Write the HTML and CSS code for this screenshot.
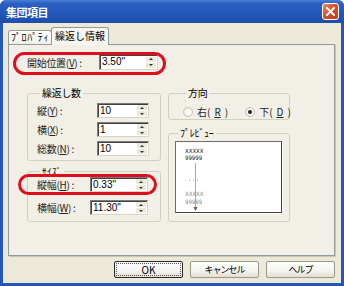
FILE: index.html
```html
<!DOCTYPE html>
<html lang="ja">
<head>
    <meta charset="UTF-8">
    <title>集団項目</title>
    <link rel="stylesheet" href="styles.css">
</head>
<body>
    <div class="window">
        <div class="titlebar">
            <span class="title">集団項目</span>
            <span class="close">
                <svg width="9" height="9" viewBox="0 0 9 9"><path d="M1 1 L8 8 M8 1 L1 8" stroke="#fff" stroke-width="2" stroke-linecap="square"/></svg>
            </span>
        </div>
        <div class="client">
            <div class="tabs">
                <div class="tab">ﾌﾟﾛﾊﾟﾃｨ</div>
                <div class="tab active">繰返し情報</div>
            </div>
            <div class="panel">
                <div class="field start marked">
                    <label>開始位置(<u>V</u>) :</label>
                    <div class="spin"><span class="val">3.50"</span><span class="arrows"><i class="up"></i><i class="down"></i></span></div>
                </div>
                <div class="columns">
                    <div class="col left">
                        <fieldset class="group repeat">
                            <legend>繰返し数</legend>
                            <div class="field">
                                <label>縦(<u>Y</u>) :</label>
                                <div class="spin"><span class="val">10</span><span class="arrows"><i class="up"></i><i class="down"></i></span></div>
                            </div>
                            <div class="field">
                                <label>横(<u>X</u>) :</label>
                                <div class="spin"><span class="val">1</span><span class="arrows"><i class="up"></i><i class="down"></i></span></div>
                            </div>
                            <div class="field">
                                <label>総数(<u>N</u>) :</label>
                                <div class="spin"><span class="val">10</span><span class="arrows"><i class="up"></i><i class="down"></i></span></div>
                            </div>
                        </fieldset>
                        <fieldset class="group size">
                            <legend>ｻｲｽﾞ</legend>
                            <div class="field marked">
                                <label>縦幅(<u>H</u>) :</label>
                                <div class="spin"><span class="val">0.33"</span><span class="arrows"><i class="up"></i><i class="down"></i></span></div>
                            </div>
                            <div class="field">
                                <label>横幅(<u>W</u>) :</label>
                                <div class="spin"><span class="val">11.30"</span><span class="arrows"><i class="up"></i><i class="down"></i></span></div>
                            </div>
                        </fieldset>
                    </div>
                    <div class="col right">
                        <fieldset class="group dir">
                            <legend>方向</legend>
                            <div class="radios">
                                <span class="radio"><i class="dot"></i>右(<u>R</u>)</span>
                                <span class="radio checked"><i class="dot"></i>下(<u>D</u>)</span>
                            </div>
                        </fieldset>
                        <fieldset class="group preview">
                            <legend>ﾌﾟﾚﾋﾞｭｰ</legend>
                            <div class="preview-box">
                                <svg width="105" height="70" viewBox="0 0 105 70">
                                    <line x1="19.5" y1="21" x2="19.5" y2="66" stroke="#a8a8a8" stroke-width="1"/>
                                    <line x1="9" y1="38.5" x2="25" y2="38.5" stroke="#b0b0b0" stroke-width="1" stroke-dasharray="1 3"/>
                                    <text x="9" y="11" class="pv">XXXXX</text>
                                    <text x="9" y="18" class="pv">99999</text>
                                    <text x="9" y="54" class="pv dim">XXXXX</text>
                                    <text x="9" y="62" class="pv dim">99999</text>
                                    <path d="M17.5 65 L21.5 65 L19.5 69 Z" fill="#606060"/>
                                </svg>
                            </div>
                        </fieldset>
                    </div>
                </div>
            </div>
            <div class="buttons">
                <button class="btn default"><span>OK</span></button>
                <button class="btn"><span>キャンセル</span></button>
                <button class="btn"><span>ヘルプ</span></button>
            </div>
        </div>
    </div>
</body>
</html>
```

FILE: styles.css
```css
body {
    margin: 0;
    font-family: "Noto Sans CJK JP", sans-serif;
    font-size: 10px;
    color: #000;
    background: #fff;
}

.window {
    width: 344px;
    height: 286px;
    background: #2557b8;
    border-radius: 6px 6px 0 0;
    display: flex;
    flex-direction: column;
    overflow: hidden;
}

.titlebar {
    height: 23px;
    display: flex;
    align-items: center;
    justify-content: space-between;
    padding: 0 5px 0 6px;
    background: linear-gradient(#4a7fd8, #2a60c2 15%, #2356b8 60%, #1d4ea9);
}

.title {
    color: #fff;
    font-weight: bold;
    font-size: 11px;
    letter-spacing: -0.5px;
}

.close {
    width: 15px;
    height: 15px;
    border: 1px solid #fff;
    border-radius: 3px;
    background: linear-gradient(135deg, #e98a6c, #d9502c 45%, #c23c1a);
    display: flex;
    align-items: center;
    justify-content: center;
}

.client {
    flex: 1;
    margin: 0 3px 3px;
    background: #ece9d8;
}

.tabs {
    display: flex;
    align-items: flex-end;
    margin: 4px 0 0 5px;
    height: 17px;
}

.tab {
    box-sizing: border-box;
    height: 14px;
    width: 44px;
    border: 1px solid #919b9c;
    border-bottom: none;
    border-radius: 3px 3px 0 0;
    background: linear-gradient(#fff, #f0efe8);
    text-align: center;
    line-height: 12px;
    font-size: 10px;
    letter-spacing: 0.6px;
    white-space: nowrap;
}

.tab.active {
    position: relative;
    z-index: 1;
    width: 58px;
    height: 18px;
    margin-left: -1px;
    margin-bottom: -1px;
    background: #f6f5ef;
    line-height: 16px;
    letter-spacing: 0;
}

.panel {
    box-sizing: border-box;
    margin-left: 5px;
    width: 327px;
    height: 212px;
    border: 1px solid #919b9c;
    background: #f2f0e6;
    box-shadow: 1px 1px 0 #c9c5b5;
}

.field {
    display: flex;
    align-items: center;
    height: 15px;
    position: relative;
}

.field label {
    white-space: nowrap;
    letter-spacing: -0.3px;
    line-height: 11px;
    color: #222;
}

.field u {
    text-underline-offset: 1px;
}

.spin {
    box-sizing: border-box;
    height: 15px;
    display: flex;
    align-items: center;
    justify-content: space-between;
    background: #fff;
    border: 1px solid;
    border-color: #7c7c7c #d8d5c8 #d8d5c8 #7c7c7c;
    box-shadow: inset 1px 1px 0 #404040;
}

.val {
    font-family: "Liberation Sans", sans-serif;
    font-size: 10px;
    padding-left: 2px;
    line-height: 12px;
}

.arrows {
    display: flex;
    flex-direction: column;
    gap: 1px;
    margin-right: 1px;
}

.arrows i {
    width: 10px;
    height: 5px;
    background: #ece9d8;
    display: flex;
    align-items: center;
    justify-content: center;
}

.arrows i::after {
    content: "";
    border-left: 2px solid transparent;
    border-right: 2px solid transparent;
}

.arrows .up::after {
    border-bottom: 2px solid #333;
}

.arrows .down::after {
    border-top: 2px solid #333;
}

.marked::after {
    content: "";
    position: absolute;
    border: 3px solid #dd0f1e;
    border-radius: 12px;
    pointer-events: none;
}

.start {
    margin: 9px 0 0 18px;
    height: 16px;
    width: 131px;
}

.start label {
    width: 72px;
}

.start .spin {
    width: 59px;
    height: 16px;
}

.start.marked::after {
    left: -14px;
    right: -8px;
    top: -2px;
    bottom: -5px;
}

.columns {
    display: flex;
    gap: 7px;
    margin: 18px 0 0 18px;
}

.col {
    display: flex;
    flex-direction: column;
}

.col.left {
    width: 134px;
}

.col.right {
    width: 122px;
}

.group {
    margin: 0;
    padding: 0;
    min-width: 0;
    border: 1px solid #d0d0bf;
    border-radius: 3px;
}

.group legend {
    font-size: 10px;
    line-height: 10px;
    padding: 0 2px;
    margin-left: 3px;
    letter-spacing: -0.3px;
}

.repeat {
    padding: 5px 0 4px 9px;
}

.repeat .field + .field {
    margin-top: 4px;
}

.repeat label {
    width: 60px;
}

.repeat .spin {
    width: 52px;
}

.size {
    margin-top: 6px;
    padding: 0 0 6px 9px;
}

.size legend {
    line-height: 9px;
    font-size: 9px;
    letter-spacing: 0.5px;
}

.size .field:first-of-type {
    margin-top: 1px;
}

.size .field + .field {
    margin-top: 8px;
}

.size label {
    width: 53px;
}

.size .spin {
    width: 58px;
}

.size .marked::after {
    left: -19px;
    right: 3px;
    top: -3px;
    bottom: -3px;
}

.dir {
    padding: 7px 0 1px 14px;
}

.radios {
    display: flex;
    align-items: center;
    height: 13px;
    gap: 17px;
}

.radio {
    display: flex;
    align-items: center;
    gap: 4px;
    white-space: nowrap;
    flex-shrink: 0;
    color: #222;
}

.dot {
    box-sizing: border-box;
    width: 10px;
    height: 10px;
    border-radius: 50%;
    border: 1px solid #c4c2b6;
    background: radial-gradient(circle at 60% 60%, #fff, #e8e6dc);
    display: flex;
    align-items: center;
    justify-content: center;
}

.checked .dot::after {
    content: "";
    width: 4px;
    height: 4px;
    border-radius: 50%;
    background: #222;
}

.preview {
    margin-top: 8px;
    padding: 3px 0 8px 6px;
}

.preview-box {
    box-sizing: border-box;
    width: 107px;
    height: 72px;
    background: #fff;
    border: 1px solid;
    border-color: #6a6a6a #404040 #404040 #6a6a6a;
    box-shadow: 1px 1px 0 #fff;
}

.preview-box svg {
    display: block;
}

.pv {
    font-family: "DejaVu Sans Condensed", "DejaVu Sans", sans-serif;
    font-size: 6px;
    fill: #111;
}

.pv.dim {
    fill: #8a8a8a;
}

.buttons {
    display: flex;
    justify-content: flex-end;
    gap: 7px;
    margin-top: 5px;
    padding-right: 6px;
}

.btn {
    box-sizing: border-box;
    width: 69px;
    height: 17px;
    padding: 1px;
    border: 1px solid #9a9889;
    border-radius: 2px;
    background: linear-gradient(#ffffff, #f4f3ee 60%, #e2dfd2);
    font-family: "Noto Sans CJK JP", sans-serif;
    font-size: 9px;
    letter-spacing: -1px;
    line-height: 11px;
    color: #000;
}

.btn span {
    display: block;
    box-sizing: border-box;
    height: 13px;
    line-height: 12px;
    border: 1px dotted transparent;
}

.btn.default {
    border: 1px solid #2b2b2b;
    font-size: 10px;
    letter-spacing: 0;
}

.btn.default span {
    border-color: #555;
}
```
